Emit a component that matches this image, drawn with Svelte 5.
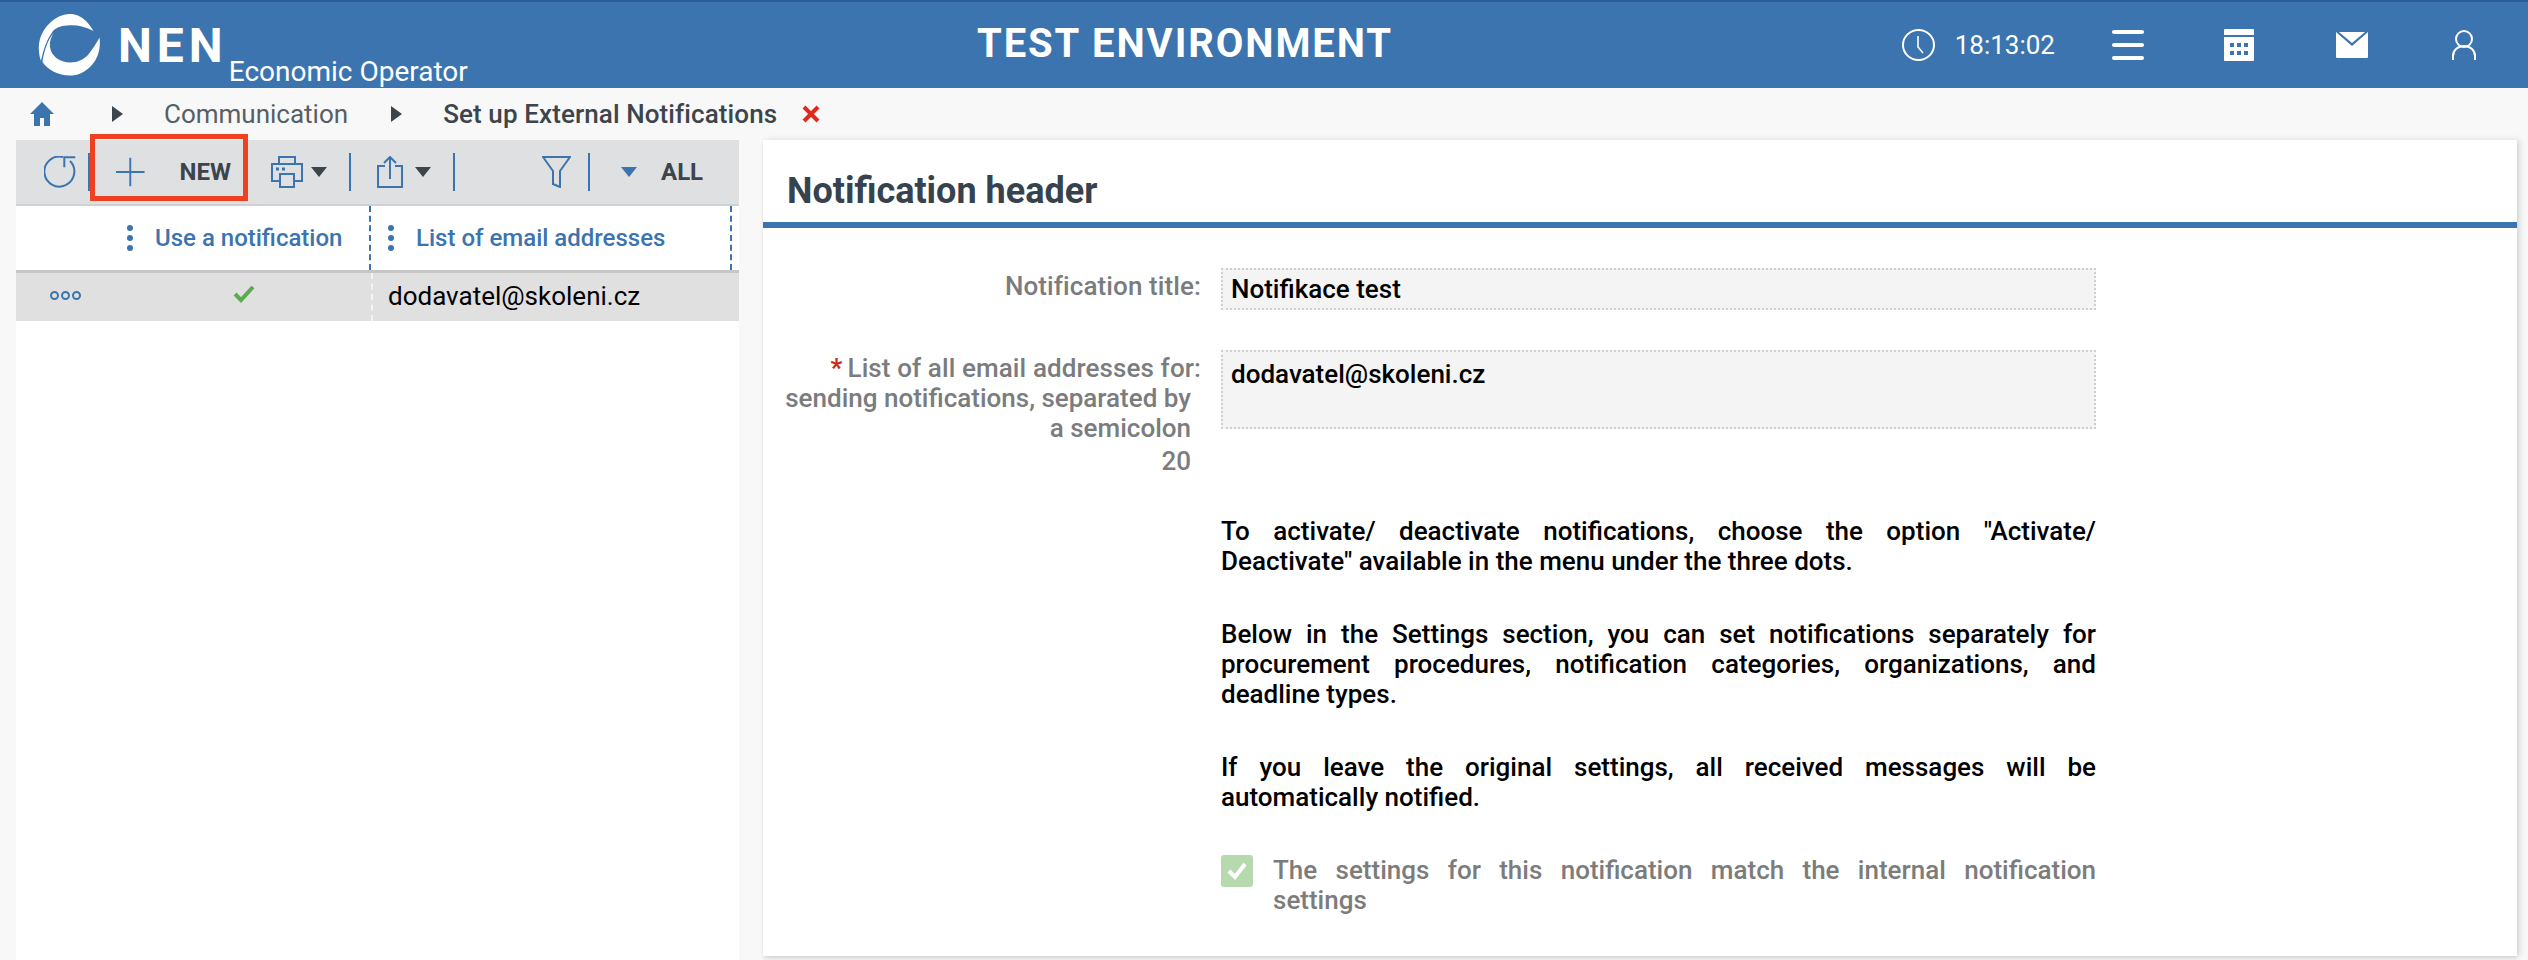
<script>
	const paragraphs = [
		'To activate/ deactivate notifications, choose the option "Activate/ Deactivate" available in the menu under the three dots.',
		"Below in the Settings section, you can set notifications separately for procurement procedures, notification categories, organizations, and deadline types.",
		"If you leave the original settings, all received messages will be automatically notified.",
	];
</script>

<div class="page">
	<header class="topbar">
		<div class="brand">
			<svg class="logo" viewBox="0 0 64 64" width="64" height="64" fill="#fff">
				<path d="M5 49C1 38 2 24 11 14C18 6 26 2 34 2C44 2 52 9 57.500 19C50 15 42 13 34 13.300C26 13.500 21 15 17 19C11 27 7 38 5 49Z" />
				<path d="M63.500 25.500C65 36 62 48 54 55C48 61 41 63.500 34 63.500C22 63.500 12 58 6.500 50C8 38 12 28 17.500 21C14.500 26 13.500 31 14 35C15 44 24 50.500 34 50.500C42 50.500 48 47 52 43C56 38 60 32 63.500 25.500Z" />
			</svg>
			<span class="nen">NEN</span>
			<span class="role">Economic Operator</span>
		</div>
		<div class="env">TEST ENVIRONMENT</div>
		<div class="tools">
			<svg class="clock" viewBox="0 0 33 32" width="33" height="32" fill="none" stroke="#fff" stroke-width="2">
				<ellipse cx="16.500" cy="16" rx="15.500" ry="15" />
				<path d="M16 7V18L21 24" stroke-width="1.600" />
			</svg>
			<span class="time">18:13:02</span>
			<svg class="burger" viewBox="0 0 32 30" width="32" height="30" fill="#fff">
				<rect y="0" width="32" height="4" rx="2" />
				<rect y="13" width="32" height="4" rx="2" />
				<rect y="26" width="32" height="4" rx="2" />
			</svg>
			<svg class="cal" viewBox="0 0 30 32" width="30" height="32">
				<path d="M1 0H29a1 1 0 0 1 1 1V6H0V1a1 1 0 0 1 1-1ZM0 8H30V31a1 1 0 0 1-1 1H1a1 1 0 0 1-1-1Z" fill="#fff" />
				<g fill="#3b74ae">
					<rect x="6" y="14" width="4" height="4" /><rect x="13" y="14" width="4" height="4" /><rect x="20" y="14" width="4" height="4" />
					<rect x="6" y="22" width="4" height="4" /><rect x="13" y="22" width="4" height="4" /><rect x="20" y="22" width="4" height="4" />
				</g>
			</svg>
			<svg class="mail" viewBox="0 0 32 26" width="32" height="26" fill="#fff">
				<path d="M0 0L16 14L32 0V25a1 1 0 0 1-1 1H1a1 1 0 0 1-1-1Z" />
				<path d="M3 0H29L16 11Z" />
			</svg>
			<svg class="user" viewBox="0 0 24 30" width="24" height="30" fill="none" stroke="#fff" stroke-width="2">
				<ellipse cx="12" cy="9" rx="8" ry="8" />
				<path d="M1 30V26C1 20 6 16 12 16S23 20 23 26V30" />
			</svg>
		</div>
	</header>

	<nav class="crumbs">
		<svg class="home" viewBox="0 0 24 24" width="24" height="24" fill="#3b74ae">
			<path d="M12 0L24 12H20V24H14V16H10V24H4V12H0Z" />
		</svg>
		<span class="arrow first"></span>
		<span class="crumb">Communication</span>
		<span class="arrow"></span>
		<span class="crumb current">Set up External Notifications</span>
		<svg class="close" viewBox="0 0 18 18" width="18" height="18" stroke="#e2281c" stroke-width="4">
			<path d="M2 2L16 16M16 2L2 16" />
		</svg>
	</nav>

	<main class="body">
		<section class="list">
			<div class="toolbar">
				<svg class="refresh" viewBox="0 0 33 32" width="33" height="32" fill="none" stroke="#3b74ae" stroke-width="2">
					<path d="M26 5A15 15 0 1 1 19 1" />
					<path d="M31.300 1.300H20.300V11.300" />
				</svg>
				<span class="sep new-sep"></span>
				<div class="new">
					<svg viewBox="0 0 30 30" width="30" height="30" stroke="#3b74ae" stroke-width="2">
						<path d="M15 0V30M0 15H30" />
					</svg>
					<span>NEW</span>
				</div>
				<svg class="print" viewBox="0 0 32 32" width="32" height="32" fill="none" stroke="#3b74ae" stroke-width="2">
					<path d="M8 8V1H24V8" />
					<path d="M9 25H1V8H31V25H23" />
					<rect x="9" y="18" width="14" height="13" />
					<path d="M5 13H8M11 13H14" stroke-width="3" />
				</svg>
				<span class="caret"></span>
				<span class="sep"></span>
				<svg class="share" viewBox="0 0 26 32" width="26" height="32" fill="none" stroke="#3b74ae" stroke-width="2">
					<path d="M8 10H1V31H25V10H18" />
					<path d="M13 23V1M7 7L13 1L19 7" />
				</svg>
				<span class="caret share-caret"></span>
				<span class="sep"></span>
				<svg class="filter" viewBox="0 0 29 32" width="29" height="32" fill="none" stroke="#3b74ae" stroke-width="2">
					<path d="M1 1H28L18 15V31L11 28V15Z" />
				</svg>
				<span class="sep filter-sep"></span>
				<span class="caret blue"></span>
				<span class="all">ALL</span>
			</div>
			<div class="thead">
				<div class="th first">
					<span class="dots"></span>
					<span>Use a notification</span>
				</div>
				<div class="th second">
					<span class="dots"></span>
					<span>List of email addresses</span>
				</div>
			</div>
			<div class="row">
				<div class="more"><i></i><i></i><i></i></div>
				<div class="state">
					<svg viewBox="0 0 22 17" width="22" height="17" fill="none" stroke="#5cab51" stroke-width="4">
						<path d="M2 8L8 14L20 1" />
					</svg>
				</div>
				<div class="email">dodavatel@skoleni.cz</div>
			</div>
		</section>

		<section class="detail">
			<h1>Notification header</h1>
			<div class="form">
				<div class="field">
					<div class="label">Notification title:</div>
					<div class="input">Notifikace test</div>
				</div>
				<div class="field second-field">
					<div class="label wrapped">
						<div class="label-first"><span class="req">*</span>List of all email addresses for:</div>
						<div class="label-rest">sending notifications, separated by a semicolon</div>
						<div class="label-count">20</div>
					</div>
					<div class="input tall">dodavatel@skoleni.cz</div>
				</div>
				<div class="texts">
					{#each paragraphs as text}
						<p>{text}</p>
					{/each}
					<div class="check">
						<span class="box">
							<svg viewBox="0 0 20 18" width="20" height="18" fill="none" stroke="#fff" stroke-width="4">
								<path d="M2 9L8 15L18 2" />
							</svg>
						</span>
						<p>The settings for this notification match the internal notification settings</p>
					</div>
				</div>
			</div>
		</section>
	</main>
</div>

<style>
	:global(body) {
		margin: 0;
		background: #f8f8f8;
	}

	.page {
		width: 2528px;
		height: 960px;
		overflow: hidden;
		display: flex;
		flex-direction: column;
		font-family: Roboto, "Liberation Sans", sans-serif;
	}

	.topbar {
		height: 88px;
		box-sizing: border-box;
		border-top: 2px solid #2c5c98;
		background: #3b74ae;
		color: #fff;
		display: grid;
		grid-template-columns: 977px auto 1fr;
	}

	.brand {
		display: flex;
		padding-left: 36px;
		padding-top: 10px;
	}

	.logo {
		flex: none;
	}

	.nen {
		margin-left: 18px;
		margin-top: 6px;
		font-size: 48px;
		line-height: 56px;
		font-weight: 700;
		letter-spacing: 5px;
	}

	.role {
		margin-left: 1px;
		margin-top: 44px;
		font-size: 28px;
		line-height: 32px;
	}

	.env {
		font-size: 40px;
		font-weight: 700;
		line-height: 84px;
		letter-spacing: 1.9px;
	}

	.tools {
		display: flex;
		align-items: center;
		padding-right: 52px;
		justify-content: flex-end;
	}

	.time {
		margin-left: 20px;
		font-size: 26px;
	}

	.burger {
		margin-left: 57px;
	}

	.cal {
		margin-left: 80px;
	}

	.mail {
		margin-left: 82px;
	}

	.user {
		margin-left: 84px;
	}

	.crumbs {
		height: 52px;
		flex: none;
		display: flex;
		align-items: center;
		padding-left: 30px;
		color: #565e66;
		font-size: 26px;
	}

	.arrow {
		width: 0;
		height: 0;
		margin: 0 41px 0 43px;
		border-left: 11px solid #3c444c;
		border-top: 8px solid transparent;
		border-bottom: 8px solid transparent;
	}

	.arrow.first {
		margin-left: 58px;
	}

	.current {
		font-weight: 500;
		color: #3c444c;
		letter-spacing: 0.1px;
	}

	.close {
		margin-left: 25px;
	}

	.body {
		flex: 1;
		display: flex;
		padding-left: 16px;
		min-height: 0;
	}

	.list {
		width: 723px;
		background: #fff;
		flex: none;
	}

	.toolbar {
		height: 64px;
		border-bottom: 2px solid #d0d1d3;
		background: #dfe0e2;
		display: flex;
		align-items: center;
		padding-left: 28px;
	}

	.sep.new-sep {
		margin-left: 11px;
	}

	.new {
		position: relative;
		margin-left: 26px;
		display: flex;
		align-items: center;
		width: 115px;
		font-size: 24px;
		font-weight: 700;
		color: #3c444c;
	}

	.new span {
		margin-left: 35px;
	}

	.new::after {
		content: "";
		position: absolute;
		left: -26px;
		right: -17px;
		top: -23px;
		bottom: -14px;
		border-style: solid;
		border-color: #ee4122;
		border-width: 5px;
	}

	.print {
		margin-left: 40px;
	}

	.caret {
		width: 0;
		height: 0;
		margin-left: 8px;
		border-top: 10px solid #3c444c;
		border-left: 8px solid transparent;
		border-right: 8px solid transparent;
	}

	.sep {
		width: 2px;
		height: 38px;
		margin-left: 22px;
		background: #3b74ae;
	}

	.share {
		margin-left: 26px;
	}

	.share-caret {
		margin-left: 12px;
	}

	.filter {
		margin-left: 87px;
	}

	.sep.filter-sep {
		margin-left: 17px;
	}

	.caret.blue {
		margin-left: 31px;
		border-top-color: #3b74ae;
	}

	.all {
		margin-left: 24px;
		font-size: 24px;
		font-weight: 700;
		color: #3c444c;
	}

	.thead {
		display: flex;
		height: 64px;
		color: #3b74ae;
		font-size: 24px;
		font-weight: 500;
	}

	.th {
		display: flex;
		align-items: center;
		box-sizing: border-box;
		border-right: 2px dashed #3b74ae;
	}

	.th.first {
		width: 355px;
		padding-left: 111px;
	}

	.th.second {
		width: 361px;
		padding-left: 17px;
	}

	.dots {
		width: 6px;
		height: 6px;
		margin-right: 22px;
		border-radius: 50%;
		background: #3b74ae;
		box-shadow: 0 -10px #3b74ae, 0 10px #3b74ae;
	}

	.row {
		display: flex;
		align-items: center;
		height: 48px;
		border-top: 3px solid #c6c6c6;
		background: #e0e0e0;
	}

	.more {
		width: 217px;
		box-sizing: border-box;
		padding-left: 34px;
		padding-bottom: 3px;
		display: flex;
		gap: 2px;
	}

	.more i {
		width: 5px;
		height: 5px;
		border: 2px solid #3b74ae;
		border-radius: 50%;
	}

	.state {
		width: 138px;
		display: flex;
		padding-bottom: 6px;
	}

	.email {
		padding-left: 15px;
		padding-bottom: 2px;
		box-sizing: border-box;
		border-left: 2px dashed #f2f4f6;
		height: 100%;
		display: flex;
		align-items: center;
		font-size: 26px;
		color: #000;
	}

	.detail {
		margin-left: 24px;
		width: 1754px;
		height: 816px;
		flex: none;
		background: #fff;
		box-shadow: 3px 0 6px rgba(0, 0, 0, 0.12), 0 3px 3px rgba(0, 0, 0, 0.08);
	}

	h1 {
		margin: 0;
		box-sizing: border-box;
		height: 88px;
		padding-top: 20px;
		padding-left: 24px;
		border-bottom: 6px solid #3b74ae;
		font-size: 36px;
		font-weight: 700;
		line-height: 62px;
		color: #36424d;
	}

	.form {
		padding-top: 40px;
	}

	.field {
		display: flex;
		align-items: flex-start;
	}

	.second-field {
		margin-top: 40px;
	}

	.label {
		width: 438px;
		text-align: right;
		font-size: 26px;
		font-weight: 500;
		line-height: 30px;
		letter-spacing: 0.1px;
		color: #7a7c7e;
		padding-top: 3px;
	}

	.label-rest,
	.label-count {
		margin-right: 10px;
		margin-left: 16px;
		letter-spacing: 0;
	}

	.label-count {
		margin-top: 3px;
	}

	.req {
		margin-right: 5px;
		color: #cc2a22;
		font-weight: 700;
	}

	.input {
		margin-left: 20px;
		width: 875px;
		height: 42px;
		box-sizing: border-box;
		border: 2px dotted #cfcfcf;
		padding: 3px 8px 0;
		background: #f4f4f4;
		font-size: 26px;
		font-weight: 500;
		line-height: 32px;
		color: #000;
	}

	.input.tall {
		height: 79px;
		padding-top: 6px;
	}

	.texts {
		margin-left: 458px;
		width: 875px;
		margin-top: 40px;
		font-size: 26px;
		font-weight: 500;
		line-height: 30px;
		color: #000;
	}

	p {
		margin: 0 0 43px;
		text-align: justify;
	}

	.check {
		display: flex;
		color: #7c7c7c;
	}

	.check p {
		margin: 0;
		margin-left: 20px;
	}

	.box {
		flex: none;
		width: 32px;
		height: 32px;
		border-radius: 3px;
		background: #b6d9ae;
		display: flex;
		align-items: center;
		justify-content: center;
	}
</style>
